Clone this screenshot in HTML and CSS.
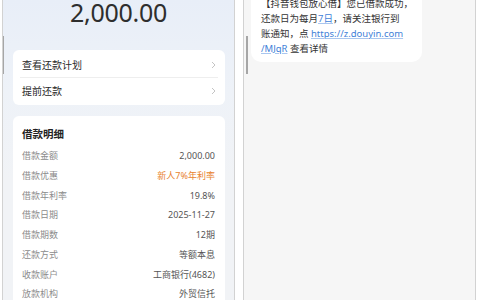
FILE: index.html
```html
<!DOCTYPE html>
<html lang="zh-CN">
<head>
    <meta charset="UTF-8">
    <meta name="viewport" content="width=device-width, initial-scale=1.0">
    <title>借款成功</title>
    <link rel="stylesheet" href="styles.css">
</head>
<body>
    <div class="phone loan">
        <span class="thumb thumb-left"></span>
        <div class="amount">2,000.00</div>

        <div class="card menu">
            <div class="menu-row">
                <span>查看还款计划</span>
                <svg class="chev" width="5" height="8" viewBox="0 0 5 8"><polyline points="1,1 4,4 1,7" fill="none" stroke="#c4c4c4" stroke-width="1"/></svg>
            </div>
            <div class="divider"></div>
            <div class="menu-row">
                <span>提前还款</span>
                <svg class="chev" width="5" height="8" viewBox="0 0 5 8"><polyline points="1,1 4,4 1,7" fill="none" stroke="#c4c4c4" stroke-width="1"/></svg>
            </div>
        </div>

        <div class="card detail">
            <div class="detail-title">借款明细</div>
            <div class="detail-row"><span>借款金额</span><span class="val">2,000.00</span></div>
            <div class="detail-row"><span>借款优惠</span><span class="val promo">新人7%年利率</span></div>
            <div class="detail-row"><span>借款年利率</span><span class="val">19.8%</span></div>
            <div class="detail-row"><span>借款日期</span><span class="val">2025-11-27</span></div>
            <div class="detail-row"><span>借款期数</span><span class="val">12期</span></div>
            <div class="detail-row"><span>还款方式</span><span class="val">等额本息</span></div>
            <div class="detail-row"><span>收款账户</span><span class="val">工商银行(4682)</span></div>
            <div class="detail-row"><span>放款机构</span><span class="val">外贸信托</span></div>
        </div>
    </div>

    <div class="phone sms">
        <span class="thumb thumb-right"></span>
        <div class="bubble">
            【抖音钱包放心借】您已借款成功，<br>
            还款日为每月<a class="link" href="#">7日</a>，请关注银行到<br>
            账通知，点 <a class="link" href="#">https://z.douyin.com</a><br>
            <a class="link" href="#">/MJqR</a> 查看详情
        </div>
    </div>
</body>
</html>
```

FILE: styles.css
```css
body {
    margin: 0;
    display: flex;
    height: 300px;
    overflow: hidden;
    background: #ffffff;
    font-family: "Noto Sans", "Noto Sans CJK SC", sans-serif;
    color: #333333;
}

.phone {
    position: relative;
    width: 231px;
    height: 300px;
    border-left: 1px solid #d2d2d2;
    border-right: 1px solid #d2d2d2;
    overflow: hidden;
}

.thumb {
    position: absolute;
    top: 36px;
    width: 2px;
    height: 38px;
    background: #a6a6a6;
}

.thumb-left {
    left: -1px;
}

.thumb-right {
    left: 2px;
}

/* left screen */

.loan {
    margin-left: 2px;
    background: linear-gradient(#e8eef8 0px, #eef2f8 90px, #f1f3f6 180px);
}

.amount {
    font-size: 25px;
    line-height: 25px;
    text-align: center;
    color: #2e2e2e;
    letter-spacing: -0.3px;
}

.card {
    background: #ffffff;
    border-radius: 6px;
    margin: 0 9px 0 10px;
}

.menu {
    margin-top: 25px;
    padding: 2px 0;
}

.menu-row {
    display: flex;
    align-items: center;
    justify-content: space-between;
    height: 25px;
    padding: 0 9px;
    font-size: 10px;
    color: #2a2a2a;
}

.divider {
    height: 1px;
    margin: 0 7px;
    background: #eeeeee;
}

.detail {
    margin-top: 11px;
    padding: 10px 10px 10px 9px;
}

.detail-title {
    font-size: 10.5px;
    font-weight: 600;
    line-height: 16px;
    margin-bottom: 4px;
    color: #222222;
}

.detail-row {
    display: flex;
    justify-content: space-between;
    height: 19.75px;
    line-height: 19.75px;
    font-size: 9px;
    color: #8c8c8c;
}

.val {
    color: #555555;
}

.promo {
    color: #e8832f;
}

/* right screen */

.sms {
    margin-left: 8px;
    background: #f6f6f6;
}

.bubble {
    width: 151px;
    margin: -10px 0 0 7px;
    padding: 6px 10px 6px 10px;
    background: #ffffff;
    border-radius: 10px;
    font-size: 9.5px;
    line-height: 15px;
    color: #333333;
    white-space: nowrap;
}

.link {
    color: #3f7fd8;
    text-decoration: underline;
    text-decoration-color: #a9c6ef;
}
```
